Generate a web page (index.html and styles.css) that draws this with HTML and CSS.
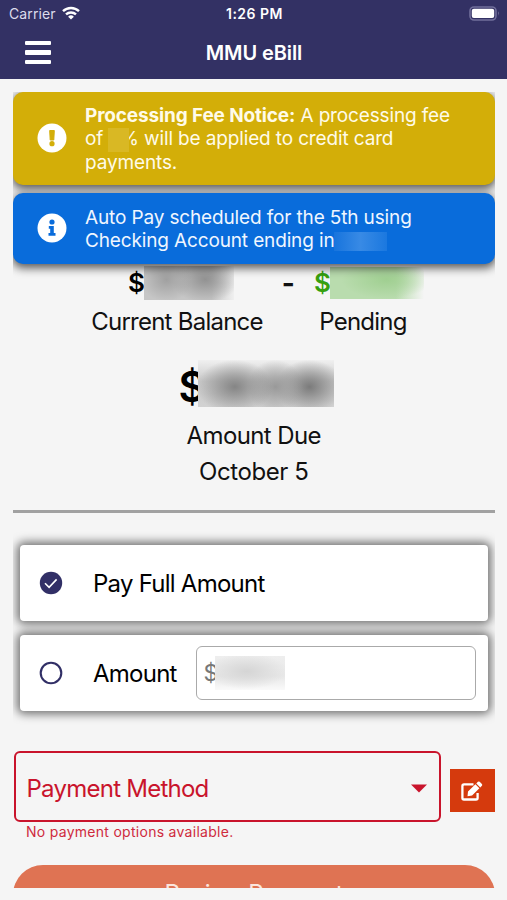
FILE: index.html
```html
<!DOCTYPE html>
<html lang="en">
<head>
<meta charset="utf-8">
<title>MMU eBill</title>
<link rel="stylesheet" href="styles.css">
</head>
<body>
<header class="header">
  <div class="status">
    <div class="carrier"><span>Carrier</span>
      <svg width="18" height="14" viewBox="0 0 18 14" fill="none" stroke="#fff" stroke-width="2.4"><path d="M1 5.2a11.6 11.6 0 0 1 16 0M4 8.4a7.4 7.4 0 0 1 10 0"/><path d="M9 13.6L6.1 10.7a4.2 4.2 0 0 1 5.8 0z" fill="#fff" stroke="none"/></svg>
    </div>
    <div class="clock">1:26 PM</div>
    <svg class="battery" width="31" height="15" viewBox="0 0 31 15"><rect x="1" y="1" width="26" height="13" rx="4" fill="none" stroke="#716f9b" stroke-width="1.6"/><rect x="2.8" y="2.8" width="22.4" height="9.2" rx="2" fill="#fff"/><path d="M29 5.3q1.8 2.2 0 4.4z" fill="#8583a8"/></svg>
  </div>
  <div class="navbar">
    <div class="menu"><i></i><i></i><i></i></div>
    <h1 class="title">MMU eBill</h1>
  </div>
</header>
<main class="content">
  <section class="alerts">
    <div class="alert warning">
      <svg class="alert-icon" viewBox="0 0 30 30"><circle cx="15" cy="15" r="14.5" fill="#fff"/><path d="M12.7 7.5h4.6l-.5 9.5h-3.6z" fill="#d3ae08" stroke="#d3ae08" stroke-linejoin="round"/><circle cx="15" cy="20.7" r="2.6" fill="#d3ae08"/></svg>
      <p><b>Processing Fee Notice:</b> A processing fee<br>of <span class="mask fee"></span><span class="percent">%</span> will be applied to credit card<br>payments.</p>
    </div>
    <div class="alert info">
      <svg class="alert-icon" viewBox="0 0 30 30"><circle cx="15" cy="15" r="14.5" fill="#fff"/><circle cx="15" cy="9" r="2.6" fill="#096cdb"/><path d="M11.8 13h5v7h1.7v2.7h-7V20h1.7v-4.3h-1.4z" fill="#096cdb"/></svg>
      <p>Auto Pay scheduled for the 5th using<br><span class="account">Checking Account ending in</span><span class="mask digits"></span></p>
    </div>
  </section>
  <section class="balances">
    <div class="balance">
      <div class="value">$<span class="mask gray"></span></div>
      <div class="label current">Current Balance</div>
    </div>
    <div class="minus">-</div>
    <div class="balance pending">
      <div class="value">$<span class="mask green"></span></div>
      <div class="label pend">Pending</div>
    </div>
  </section>
  <section class="due">
    <div class="total">$<span class="mask big"></span></div>
    <div class="label duelabel">Amount Due</div>
    <div class="label date">October 5</div>
  </section>
  <hr class="rule">
  <section class="options">
    <div class="option">
      <svg class="radio" viewBox="0 0 24 24"><circle cx="12" cy="12" r="11.2" fill="#312f66"/><path d="M6 12.3l4.1 4.1 7.5-8" fill="none" stroke="#fff" stroke-width="1.6"/></svg>
      <span class="full">Pay Full Amount</span>
    </div>
    <div class="option">
      <svg class="radio" viewBox="0 0 24 24"><circle cx="12" cy="12" r="10.3" fill="none" stroke="#312f66" stroke-width="2.1"/></svg>
      <span class="amount">Amount</span>
      <div class="field"><span>$</span><span class="mask light"></span></div>
    </div>
  </section>
  <section class="method">
    <div class="select"><span>Payment Method</span>
      <svg width="16" height="9" viewBox="0 0 16 9"><path d="M0 .5h16L8 8.5z" fill="#c9142c"/></svg>
    </div>
    <div class="edit">
      <svg width="22" height="20" viewBox="0 0 22 20"><path d="M12.5 3.3H3q-1.6 0-1.6 1.6v12Q1.4 18.5 3 18.5h12q1.6 0 1.6-1.6v-5" fill="none" stroke="#fff" stroke-width="2.3"/><path d="M6.5 15.2l.5-4.7L14.4 3.2l4 4-7.3 7.3zM15.3 2.4L16.9.8q.9-.8 1.8 0l2.2 2.2q.8.9 0 1.8l-1.6 1.6z" fill="#fff"/></svg>
    </div>
  </section>
  <div class="error">No payment options available.</div>
  <div class="submit">Review Payment</div>
</main>
</body>
</html>
```

FILE: styles.css
```css
* { box-sizing: border-box; }
body { margin: 0; height: 900px; overflow: hidden; background: #f5f5f5; color: #111; font-family: Inter, "Liberation Sans", sans-serif; font-size: 24px; letter-spacing: -.75px; }
svg { display: block; flex: none; }
p, h1 { margin: 0; }
.header { height: 79px; background: #333164; color: #fff; }
.status { display: grid; grid-template-columns: 1fr auto 1fr; height: 27px; padding: 0 7px 0 9px; align-items: center; font-size: 14px; }
.carrier { display: flex; align-items: center; gap: 6px; color: #dddcec; letter-spacing: .1px; }
.carrier svg { margin-top: -2px; }
.clock { font-weight: 600; letter-spacing: .5px; }
.battery { justify-self: end; margin-top: -1px; }
.navbar { display: grid; grid-template-columns: 1fr auto 1fr; align-items: center; height: 51px; padding: 0 24px 0 25px; }
.menu { display: grid; gap: 5px; width: 26px; }
.menu i { height: 4.3px; border-radius: 1px; background: #fff; }
.title { font-size: 20px; font-weight: 600; letter-spacing: -.1px; }

.content { height: 809px; padding: 12.5px 12.5px 0 13px; overflow: hidden; }
.alerts { position: relative; z-index: 1; height: 188px; margin-bottom: -15px; overflow: hidden; }
.alert { display: flex; align-items: center; border-radius: 10px; padding-left: 24px; color: #fff; box-shadow: 0 3px 10px 1px rgba(0,0,0,.65); font-size: 19px; line-height: 23.2px; letter-spacing: -.14px; }
.alert p { margin-left: 18px; padding-top: 2px; white-space: nowrap; }
.alert-icon { width: 30px; height: 30px; }
.warning { height: 93px; background: #d3ae08; color: #fffbe8; }
.info { height: 71px; margin-top: 8px; background: #096cdb; color: #eff6ff; }
.mask { display: inline-block; flex: none; }
.fee { position: relative; width: 21px; height: 24px; margin: -4px 0; vertical-align: middle; background: #d9b824; }
.percent { margin-left: -9px; }
.digits { width: 53px; height: 19px; margin-left: 0; vertical-align: middle; background: linear-gradient(90deg, #1774dd, #388ae5 50%, #1b78df); }

.balances { display: flex; height: 73px; padding-left: 78px; }
.balance { width: 172px; text-align: center; white-space: nowrap; }
.balance.pending { width: 88px; margin-left: 6px; }
.value { display: flex; align-items: center; height: 36px; padding-left: 37px; font-size: 26px; font-weight: 600; color: #000; }
.pending .value { padding-left: 0; margin-left: -5px; color: #36a00f; }
.minus { width: 50px; line-height: 36px; text-align: center; font-weight: 700; font-size: 28px; }
.gray { width: 90px; height: 34px; background: radial-gradient(ellipse 26px 22px at 25% 40%, #a0a0a0, transparent), radial-gradient(ellipse 34px 23px at 68% 40%, #929292, transparent), linear-gradient(90deg, #c6c6c6 75%, #f0f0f0); }
.green { width: 94px; height: 32px; background: radial-gradient(ellipse 45px 19px at 60% 40%, #a0cf91, transparent), linear-gradient(90deg, #b9dcae 70%, #f5f5f5); }
.label { line-height: 36px; }
.balance .label { padding-top: 3px; }
.due { display: flex; flex-direction: column; align-items: center; padding-top: 22px; height: 172px; }
.total { display: flex; align-items: center; height: 46px; margin-bottom: 12px; margin-left: 5px; font-size: 42px; font-weight: 600; line-height: 50px; color: #000; padding-top: 8px; }
.big { width: 136px; height: 47px; margin: -6px 0 0 -7px; background: radial-gradient(ellipse 38px 27px at 27% 57%, #858585, transparent), radial-gradient(ellipse 28px 27px at 57% 57%, #999, transparent), radial-gradient(ellipse 34px 27px at 82% 57%, #7b7b7b, transparent), linear-gradient(#f0f0f0, #c9c9c9 45%, #d2d2d2); }
.label.duelabel, .label.date { letter-spacing: -.6px; }
.label.date { letter-spacing: -.4px; }
.rule { height: 3px; margin: 0; border: 0; background: #a1a1a1; }

.options { display: grid; gap: 14px; height: 218px; margin-top: 10px; padding: 22px 7px 0; overflow: hidden; align-content: start; }
.option { display: flex; align-items: center; height: 76px; padding: 0 12px 0 19px; border-radius: 4px; background: #fff; box-shadow: 0 0 10px 3px rgba(0,0,0,.55); color: #000; }
.radio { width: 24px; height: 24px; margin-right: 30px; }
.full, .amount { padding-top: 1px; }
.field { display: flex; align-items: center; width: 280px; height: 54px; margin-left: auto; padding-left: 7px; border: 1.5px solid #aaa; border-radius: 6px; color: #777; }
.field > span:first-child { width: 11px; font-size: 23px; }
.light { width: 70px; height: 34px; background: radial-gradient(ellipse 40px 18px at 45% 45%, #d5d5d5, transparent), linear-gradient(#eee, #e8e8e8 60%, #fafafa); }

.method { display: flex; align-items: center; justify-content: space-between; height: 71px; margin-top: 10.5px; padding-left: 1px; }
.select { display: flex; align-items: center; justify-content: space-between; width: 427px; height: 71px; padding: 3px 12px 0 10.5px; border: 2px solid #c9142c; border-radius: 6px; color: #c9142c; }
.edit { display: grid; place-items: center; width: 45px; height: 43px; margin-top: 8px; background: #d53a0d; }
.error { margin-left: 13px; height: 43px; font-size: 14px; line-height: 19px; letter-spacing: .28px; color: #cf2b3d; }
.submit { height: 60px; border-radius: 30px; background: #df7353; color: #fbe5dd; text-align: center; line-height: 58px; letter-spacing: -.6px; }
```
